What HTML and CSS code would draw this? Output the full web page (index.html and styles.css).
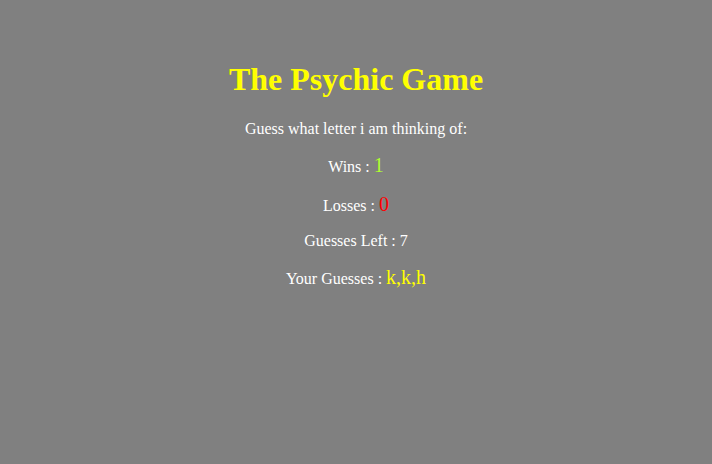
FILE: index.html
```html
<!DOCTYPE html>
<html>
<head>
<meta charset="utf-8">
<title>The Psychic Game</title>
<link rel="stylesheet" href="styles.css">
</head>
<body>
<div class="game">
  <h1 class="title">The Psychic Game</h1>
  <p>Guess what letter i am thinking of:</p>
  <p>Wins : <span class="val wins">1</span></p>
  <p>Losses : <span class="val losses">0</span></p>
  <p>Guesses Left : 7</p>
  <p>Your Guesses : <span class="val guesses">k,k,h</span></p>
</div>
</body>
</html>
```
FILE: styles.css
```css
html, body {
  background: #808080;
}
body {
  margin: 8px;
  font-family: "Liberation Serif", "Times New Roman", serif;
  color: #ffffff;
}
.game {
  text-align: center;
  padding-top: 32px;
}
.title {
  color: #ffff00;
  font-size: 32px;
  margin: 21px 0 22px;
}
.game p {
  font-size: 16px;
  margin: 16px 0;
}
.val {
  font-size: 20px;
}
.wins {
  color: #adff2f;
}
.losses {
  color: #ff0000;
}
.guesses {
  color: #ffff00;
}
```
